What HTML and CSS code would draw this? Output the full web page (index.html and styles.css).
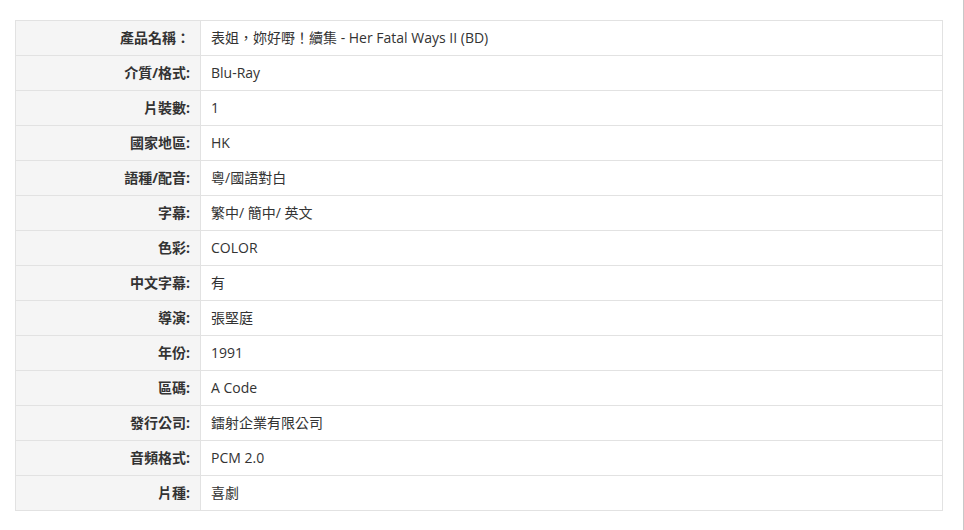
FILE: index.html
```html
<!DOCTYPE html>
<html lang="zh-Hant">
<head>
<meta charset="utf-8">
<link rel="stylesheet" href="styles.css">
</head>
<body>
<div class="page">
<table class="spec">
<tr><th>產品名稱：</th><td>表姐，妳好嘢！續集 - Her Fatal Ways II (BD)</td></tr>
<tr><th>介質/格式:</th><td>Blu-Ray</td></tr>
<tr><th>片裝數:</th><td>1</td></tr>
<tr><th>國家地區:</th><td>HK</td></tr>
<tr><th>語種/配音:</th><td>粵/國語對白</td></tr>
<tr><th>字幕:</th><td>繁中/ 簡中/ 英文</td></tr>
<tr><th>色彩:</th><td>COLOR</td></tr>
<tr><th>中文字幕:</th><td>有</td></tr>
<tr><th>導演:</th><td>張堅庭</td></tr>
<tr><th>年份:</th><td>1991</td></tr>
<tr><th>區碼:</th><td>A Code</td></tr>
<tr><th>發行公司:</th><td>鐳射企業有限公司</td></tr>
<tr><th>音頻格式:</th><td>PCM 2.0</td></tr>
<tr><th>片種:</th><td>喜劇</td></tr>
</table>
</div>
</body>
</html>
```
FILE: styles.css
```css
html, body {
  margin: 0;
  padding: 0;
  background: #fff;
}
.page {
  box-sizing: border-box;
  width: 964px;
  height: 530px;
  padding: 20px 20px 0 15px;
  border-right: 1px solid #c8c8c8;
  font-family: "Open Sans", "Noto Sans CJK TC", sans-serif;
  font-size: 14px;
  color: #333;
}
.spec {
  width: 928px;
  border-collapse: collapse;
}
.spec th, .spec td {
  height: 34px;
  padding: 0 10px;
  border: 1px solid #e2e2e2;
  line-height: 20px;
  vertical-align: middle;
}
.spec th {
  width: 164px;
  background: #f5f5f5;
  text-align: right;
  font-weight: bold;
}
.spec td {
  text-align: left;
  font-weight: normal;
}
```
